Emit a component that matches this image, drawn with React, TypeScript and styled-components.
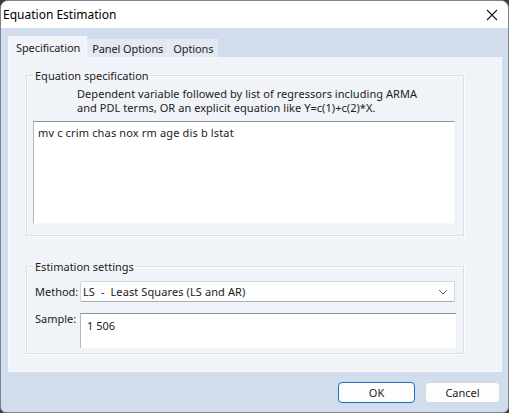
import React from "react";
import styled, { createGlobalStyle } from "styled-components";

const Global = createGlobalStyle`
  html, body { margin: 0; padding: 0; background: #3c3c3c; }
  * { box-sizing: border-box; }
`;

const FONT = `"Noto Sans", "Liberation Sans", sans-serif`;

const Window = styled.div`
  width: 509px;
  height: 413px;
  background: #d1ddec;
  border: 1px solid #7d8288;
  border-radius: 8px 8px 6px 6px;
  overflow: hidden;
  display: flex;
  flex-direction: column;
  font-family: ${FONT};
  font-size: 11px;
  color: #1b1b1b;
`;

const TitleBar = styled.div`
  height: 27px;
  flex: none;
  background: #ffffff;
  display: flex;
  align-items: center;
  justify-content: space-between;
  padding: 0 10px 0 2px;
  font-size: 12px;
  color: #000;
`;

const Body = styled.div`
  flex: 1;
  display: flex;
  flex-direction: column;
  padding: 8px 6px 0 7px;
`;

const TabRow = styled.div`
  display: flex;
  align-items: flex-end;
  height: 21px;
`;

const Tab = styled.div<{ $active?: boolean }>`
  height: ${(p) => (p.$active ? 21 : 18)}px;
  padding: 0 ${(p) => (p.$active ? 6 : 4)}px 0 ${(p) => (p.$active ? 7 : 4)}px;
  display: flex;
  align-items: center;
  background: ${(p) => (p.$active ? "#f0f3f8" : "#e3e9f2")};
  border: 1px solid ${(p) => (p.$active ? "#f7f9fc" : "#e8edf5")};
  border-bottom: none;
  color: #1b1b1b;
  white-space: nowrap;
  letter-spacing: -0.1px;
`;

const Panel = styled.div`
  height: 315px;
  background: #f0f3f8;
  border: 1px solid #f8fafd;
  border-top: none;
  padding: 12px 37px 0 17px;
  display: flex;
  flex-direction: column;
`;

const Group = styled.fieldset<{ $h: number }>`
  margin: 0;
  height: ${(p) => p.$h}px;
  border: 1px solid #d9dfe7;
  box-shadow: inset 1px 1px 0 #fbfcfe, 1px 1px 0 #fbfcfe;
  padding: 0 8px 0 6px;
  display: flex;
  flex-direction: column;
`;

const Legend = styled.legend`
  padding: 0 2px 0 2px;
  margin-left: 0;
  font-size: 11px;
  line-height: 13px;
  color: #1b1b1b;
`;

const Description = styled.div`
  margin: 5px 0 0 44px;
  line-height: 14px;
  letter-spacing: 0.05px;
`;

const TextArea = styled.div`
  margin-top: 6px;
  height: 103px;
  background: #ffffff;
  border-top: 1px solid #8e9398;
  border-left: 1px solid #b3b8bd;
  border-right: 1px solid #f6f8fb;
  border-bottom: 1px solid #f6f8fb;
  padding: 3px 4px;
  letter-spacing: 0.15px;
`;

const SettingsGroupSpacer = styled.div`
  height: 24px;
  flex: none;
`;

const FieldRow = styled.div<{ $top: number }>`
  display: flex;
  align-items: flex-start;
  margin-top: ${(p) => p.$top}px;
`;

const FieldLabel = styled.div<{ $lh: number }>`
  width: 47px;
  flex: none;
  padding-left: 2px;
  line-height: ${(p) => p.$lh}px;
`;

const Combo = styled.div`
  flex: 1;
  height: 21px;
  background: #fdfdfd;
  border: 1px solid #d3d7dc;
  border-bottom-color: #a9aeb4;
  border-radius: 2px;
  display: flex;
  align-items: center;
  justify-content: space-between;
  padding: 0 6px 0 2px;
  letter-spacing: 0.1px;
`;

const SampleBox = styled.div`
  flex: 1;
  height: 35px;
  margin-right: -1px;
  background: #ffffff;
  border-top: 1px solid #8e9398;
  border-left: 1px solid #b3b8bd;
  padding: 4px 6px;
`;

const Footer = styled.div`
  flex: 1;
  display: flex;
  justify-content: flex-end;
  align-items: flex-start;
  gap: 10px;
  padding: 10px 2px 0 0;
`;

const Button = styled.div<{ $primary?: boolean }>`
  width: ${(p) => (p.$primary ? 77 : 75)}px;
  height: 21px;
  border-radius: 4px;
  background: #fdfdfd;
  border: 1px solid ${(p) => (p.$primary ? "#1c6ec2" : "#d6dae0")};
  display: flex;
  align-items: center;
  justify-content: center;
  color: #1b1b1b;
`;

const CloseIcon = () => (
  <svg width="12" height="12" viewBox="0 0 12 12">
    <path d="M1 1 L11 11 M11 1 L1 11" stroke="#1b1b1b" strokeWidth="1.1" fill="none" />
  </svg>
);

const Chevron = () => (
  <svg width="10" height="6" viewBox="0 0 10 6">
    <path d="M1 1 L5 5 L9 1" stroke="#606060" strokeWidth="1" fill="none" />
  </svg>
);

export default function App() {
  return (
    <>
      <Global />
      <Window>
        <TitleBar>
          <span>Equation Estimation</span>
          <CloseIcon />
        </TitleBar>
        <Body>
          <TabRow>
            <Tab $active>Specification</Tab>
            <Tab>Panel Options</Tab>
            <Tab>Options</Tab>
          </TabRow>
          <Panel>
            <Group $h={167}>
              <Legend>Equation specification</Legend>
              <Description>
                Dependent variable followed by list of regressors including ARMA
                <br />
                and PDL terms, OR an explicit equation like Y=c(1)+c(2)*X.
              </Description>
              <TextArea>mv c crim chas nox rm age dis b lstat</TextArea>
            </Group>
            <SettingsGroupSpacer />
            <Group $h={94}>
              <Legend>Estimation settings</Legend>
              <FieldRow $top={8}>
                <FieldLabel $lh={21}>Method:</FieldLabel>
                <Combo>
                  <span>LS&nbsp; - &nbsp;Least Squares (LS and AR)</span>
                  <Chevron />
                </Combo>
              </FieldRow>
              <FieldRow $top={11}>
                <FieldLabel $lh={12}>Sample:</FieldLabel>
                <SampleBox>1 506</SampleBox>
              </FieldRow>
            </Group>
          </Panel>
          <Footer>
            <Button $primary>OK</Button>
            <Button>Cancel</Button>
          </Footer>
        </Body>
      </Window>
    </>
  );
}
